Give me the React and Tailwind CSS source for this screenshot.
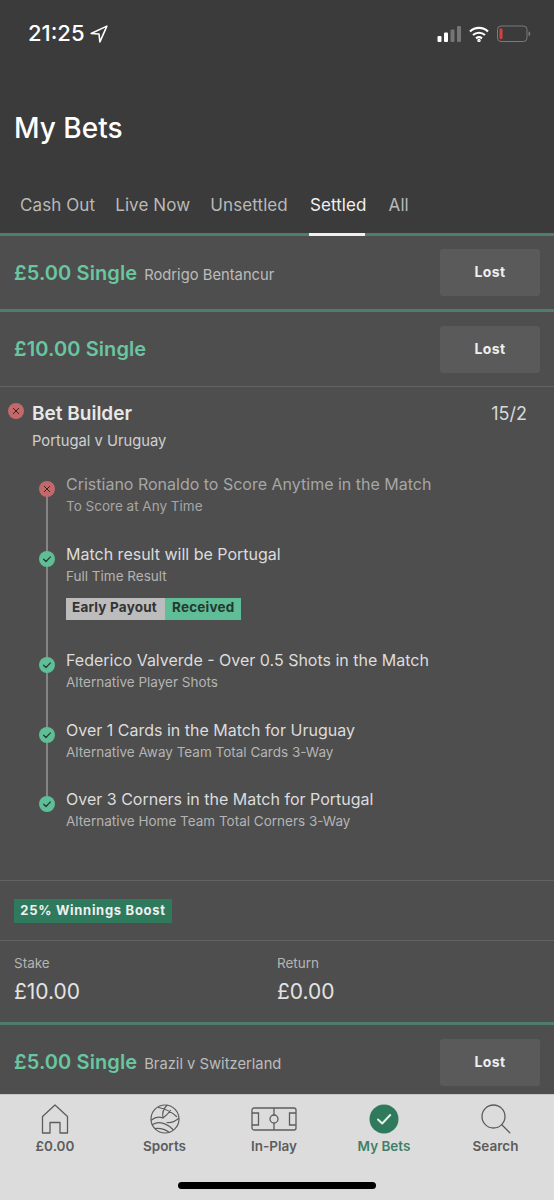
import React from 'react';

const tabs = ['Cash Out', 'Live Now', 'Unsettled', 'Settled', 'All'];

const legs = [
  { title: 'Cristiano Ronaldo to Score Anytime in the Match', sub: 'To Score at Any Time', lost: true, h: 'h-[70px]' },
  { title: 'Match result will be Portugal', sub: 'Full Time Result', payout: true, h: 'h-[106px]' },
  { title: 'Federico Valverde - Over 0.5 Shots in the Match', sub: 'Alternative Player Shots', h: 'h-[70px]' },
  { title: 'Over 1 Cards in the Match for Uruguay', sub: 'Alternative Away Team Total Cards 3-Way', h: 'h-[69px]' },
  { title: 'Over 3 Corners in the Match for Portugal', sub: 'Alternative Home Team Total Corners 3-Way', h: 'h-[69px]' },
];

const LostIcon = ({ size = 16 }) => (
  <svg width={size} height={size} viewBox="0 0 16 16" className="block">
    <circle cx="8" cy="8" r="8" fill="#c4696b" />
    <path d="M5.300 5.300l5.400 5.400M10.700 5.300l-5.400 5.400" stroke="#3a2222" strokeWidth="1" strokeLinecap="round" />
  </svg>
);

const WonIcon = () => (
  <svg width="16" height="16" viewBox="0 0 16 16" className="block">
    <circle cx="8" cy="8" r="8" fill="#5fbd97" />
    <path d="M4.600 8.200l2.400 2.300 4.400-4.600" fill="none" stroke="#24392f" strokeWidth="1.200" strokeLinecap="round" strokeLinejoin="round" />
  </svg>
);

const SingleRow = ({ amount, name, h }) => (
  <div className={`flex ${h} items-center justify-between pl-[14px] pr-[14px]`}>
    <div className="flex items-baseline gap-[7px]">
      <span className="text-[20px] font-semibold tracking-[0.1px] text-[#69c6a1]">{amount}</span>
      {name && <span className="text-[14.750px] text-[#bcbcbc]">{name}</span>}
    </div>
    <div className="flex h-[47px] w-[100px] items-center justify-center rounded-[3px] bg-[#5a5a5a] pb-[2px] text-[14px] font-bold tracking-[0.4px] text-[#efefef]">
      Lost
    </div>
  </div>
);

const Leg = ({ leg, last }) => (
  <div className={`relative flex ${leg.h} pl-[66px]`}>
    {!last && <div className="absolute left-[46px] top-[10px] h-full w-[1.500px] bg-[#858585]" />}
    <div className="absolute left-[39px] top-[7px]">
      {leg.lost ? <LostIcon /> : <WonIcon />}
    </div>
    <div>
      <div className={`text-[16px] leading-[20px] ${leg.lost ? 'text-[#a6a6a6]' : 'text-[#dcdcdc]'}`}>{leg.title}</div>
      <div className={`mt-[3px] text-[13.500px] leading-[18px] ${leg.lost ? 'text-[#a6a6a6]' : 'text-[#b4b4b4]'}`}>{leg.sub}</div>
      {leg.payout && (
        <div className="mt-[13px] flex h-[22px] text-[13.500px] font-bold leading-[19px] tracking-[0.2px]">
          <span className="w-[99px] bg-[#bcbcbc] pl-[6px] text-[#333333]">Early Payout</span>
          <span className="w-[76px] bg-[#5fbd97] pl-[7px] text-[#24392f]">Received</span>
        </div>
      )}
    </div>
  </div>
);

const Home = () => (
  <svg width="28" height="30" viewBox="0 0 28 30" fill="none" stroke="#5c5c5c" strokeWidth="1.300" strokeLinejoin="round">
    <path d="M1.500 12.500L14 1l12.500 11.500V29H19V18.500H9V29H1.500z" />
  </svg>
);

const Ball = () => (
  <svg width="30" height="30" viewBox="0 0 30 30" fill="none" stroke="#5c5c5c" strokeWidth="1.200" strokeLinejoin="round" strokeLinecap="round">
    <circle cx="15" cy="15" r="14" />
    <path d="M17 1.200C13.500 4.500 12 9 13 14M13 14C9.500 12.500 5 13 1.500 16M8.500 3.500C14 4.500 21 7.500 26.500 12.500M13 14C16.500 11.500 19 8.500 20.500 6.500M2.500 20.500C8 17.500 15 18 23 25.500M17 18.500C21 19 25 17.500 28.500 14.500M5 24.500C10 24 15 25 19 28.300" />
  </svg>
);

const Pitch = () => (
  <svg width="46" height="24" viewBox="0 0 46 24" fill="none" stroke="#5c5c5c" strokeWidth="1.300">
    <rect x="1" y="1" width="44" height="22" rx="2" />
    <path d="M23 1v7M23 16v7" />
    <circle cx="23" cy="12" r="4" />
    <path d="M1 6h6.500v12H1M45 6h-6.500v12H45" />
  </svg>
);

const Check = () => (
  <svg width="30" height="30" viewBox="0 0 30 30">
    <circle cx="15" cy="15" r="14.500" fill="#2f7a5d" />
    <path d="M9 15.500l4.200 4 8-8.500" fill="none" stroke="#e8f0ec" strokeWidth="2" strokeLinecap="round" strokeLinejoin="round" />
  </svg>
);

const Search = () => (
  <svg width="30" height="30" viewBox="0 0 30 30" fill="none" stroke="#5c5c5c" strokeWidth="1.300" strokeLinecap="round">
    <circle cx="12.500" cy="12.500" r="11.500" />
    <path d="M20.800 20.800l8 8" />
  </svg>
);

const navItems = [
  { label: '£0.00', icon: <Home />, w: 'w-[110px]' },
  { label: 'Sports', icon: <Ball />, w: 'w-[109px]' },
  { label: 'In-Play', icon: <Pitch />, w: 'w-[110px]' },
  { label: 'My Bets', icon: <Check />, w: 'w-[110px]', active: true },
  { label: 'Search', icon: <Search />, w: 'w-[113px]' },
];

export default function App() {
  return (
    <div className="flex h-[1200px] w-[554px] flex-col overflow-hidden bg-[#4e4e4e] font-['Inter',sans-serif]">
      <header className="h-[233px] shrink-0 bg-[#3b3b3b]">
        <div className="flex h-[66px] items-center justify-between pl-[28px] pr-[22px] pt-[1px]">
          <div className="flex items-center gap-[5px]">
            <span className="text-[22px] font-medium text-white">21:25</span>
            <svg width="18" height="18" viewBox="0 0 16 16" fill="none" stroke="#ffffff" strokeWidth="1.400" strokeLinejoin="round">
              <path d="M15 1L1 7.500l7 .5.800 7z" />
            </svg>
          </div>
          <div className="flex items-center gap-[7px]">
            <svg width="25" height="16" viewBox="0 0 24 16">
              <rect x="0" y="10" width="4" height="6" rx="1" fill="#ffffff" />
              <rect x="6.500" y="6.500" width="4" height="9.500" rx="1" fill="#ffffff" />
              <rect x="13" y="3.500" width="4" height="12.500" rx="1" fill="#757575" />
              <rect x="19.500" y="0" width="4" height="16" rx="1" fill="#757575" />
            </svg>
            <svg width="20" height="16" viewBox="0 0 20 16" fill="none" stroke="#ffffff" strokeWidth="2.200">
              <path d="M1 5.500c5-4.800 13-4.800 18 0M4 9c3.400-3 8.600-3 12 0M7 12.300c1.700-1.300 4.300-1.300 6 0" />
              <circle cx="10" cy="14.500" r=".6" fill="#ffffff" />
            </svg>
            <svg width="36" height="18" viewBox="0 0 34 18" fill="none">
              <rect x=".5" y="1" width="29.500" height="15.500" rx="3.500" stroke="#7b7b7b" />
              <rect x="2.500" y="3.500" width="3" height="10.500" rx="1" fill="#d9403c" />
              <path d="M31.500 6.500c1.300.3 1.800 1.200 1.800 2.200s-.5 2-1.800 2.300z" fill="#7b7b7b" />
            </svg>
          </div>
        </div>
        <h1 className="mt-[42px] pl-[14px] text-[28px] font-medium leading-[40px] text-white">My Bets</h1>
        <nav className="mt-[45px] flex gap-[20px] pl-[20px]">
          {tabs.map((t) => (
            <div
              key={t}
              className={`text-[17px] leading-[24px] tracking-[0.1px] ${t === 'Settled' ? 'ml-[2px] text-[#f0f0f0]' : t === 'All' ? 'ml-[2px] text-[#b9b9b9]' : 'text-[#b9b9b9]'}`}
            >
              {t}
            </div>
          ))}
        </nav>
      </header>

      <div className="relative h-[3px] shrink-0 bg-[#4f7d6b]">
        <div className="absolute left-[309px] top-0 h-[3px] w-[56px] bg-[#f0f0f0]" />
      </div>

      <main className="min-h-0 flex-1 overflow-hidden">
        <SingleRow amount="£5.00 Single" name="Rodrigo Bentancur" h="h-[73px]" />
        <div className="h-[3px] bg-[#4f7d6b]" />
        <SingleRow amount="£10.00 Single" h="h-[74px]" />
        <div className="h-px bg-[#636363]" />

        <section className="h-[493px]">
          <div className="relative flex items-start justify-between pl-[32px] pr-[27px] pt-[15px]">
            <div className="absolute left-[8px] top-[16px]">
              <LostIcon />
            </div>
            <div>
              <div className="text-[19px] font-semibold leading-[24px] text-[#e8e8e8]">Bet Builder</div>
              <div className="mt-[5px] text-[14.750px] leading-[20px] text-[#d0d0d0]">Portugal v Uruguay</div>
            </div>
            <div className="text-[18px] leading-[24px] text-[#d8d8d8]">15/2</div>
          </div>
          <div className="mt-[23px]">
            {legs.map((leg, i) => (
              <Leg key={leg.title} leg={leg} last={i === legs.length - 1} />
            ))}
          </div>
        </section>

        <div className="h-px bg-[#636363]" />
        <div className="flex h-[59px] items-center pl-[14px]">
          <span className="flex h-[24px] w-[158px] items-center justify-center bg-[#2f7a5d] text-[13px] font-bold tracking-[0.7px] text-[#f0f0f0]">
            25% Winnings Boost
          </span>
        </div>
        <div className="h-px bg-[#636363]" />
        <div className="flex h-[81px] pl-[14px] pt-[13px]">
          <div className="w-[263px]">
            <div className="text-[13.500px] leading-[18px] text-[#b4b4b4]">Stake</div>
            <div className="mt-[5px] text-[21px] leading-[30px] text-[#e3e3e3]">£10.00</div>
          </div>
          <div>
            <div className="text-[13.500px] leading-[18px] text-[#b4b4b4]">Return</div>
            <div className="mt-[5px] text-[21px] leading-[30px] text-[#e3e3e3]">£0.00</div>
          </div>
        </div>
        <div className="h-[3px] bg-[#4f7d6b]" />
        <SingleRow amount="£5.00 Single" name="Brazil v Switzerland" h="h-[74px]" />
      </main>

      <footer className="relative h-[106px] shrink-0 border-t border-[#c8c8c8] bg-[#dcdcdc]">
        <div className="flex pt-[8px]">
          {navItems.map((item) => (
            <div key={item.label} className={`flex ${item.w} flex-col items-center`}>
              <div className="flex h-[32px] items-center justify-center">{item.icon}</div>
              <div className={`mt-[2px] text-[13.500px] font-semibold leading-[18px] ${item.active ? 'text-[#3f7f66]' : 'text-[#5c5c5c]'}`}>
                {item.label}
              </div>
            </div>
          ))}
        </div>
        <div className="absolute bottom-[11px] left-[178px] h-[7px] w-[198px] rounded-full bg-black" />
      </footer>
    </div>
  );
}
